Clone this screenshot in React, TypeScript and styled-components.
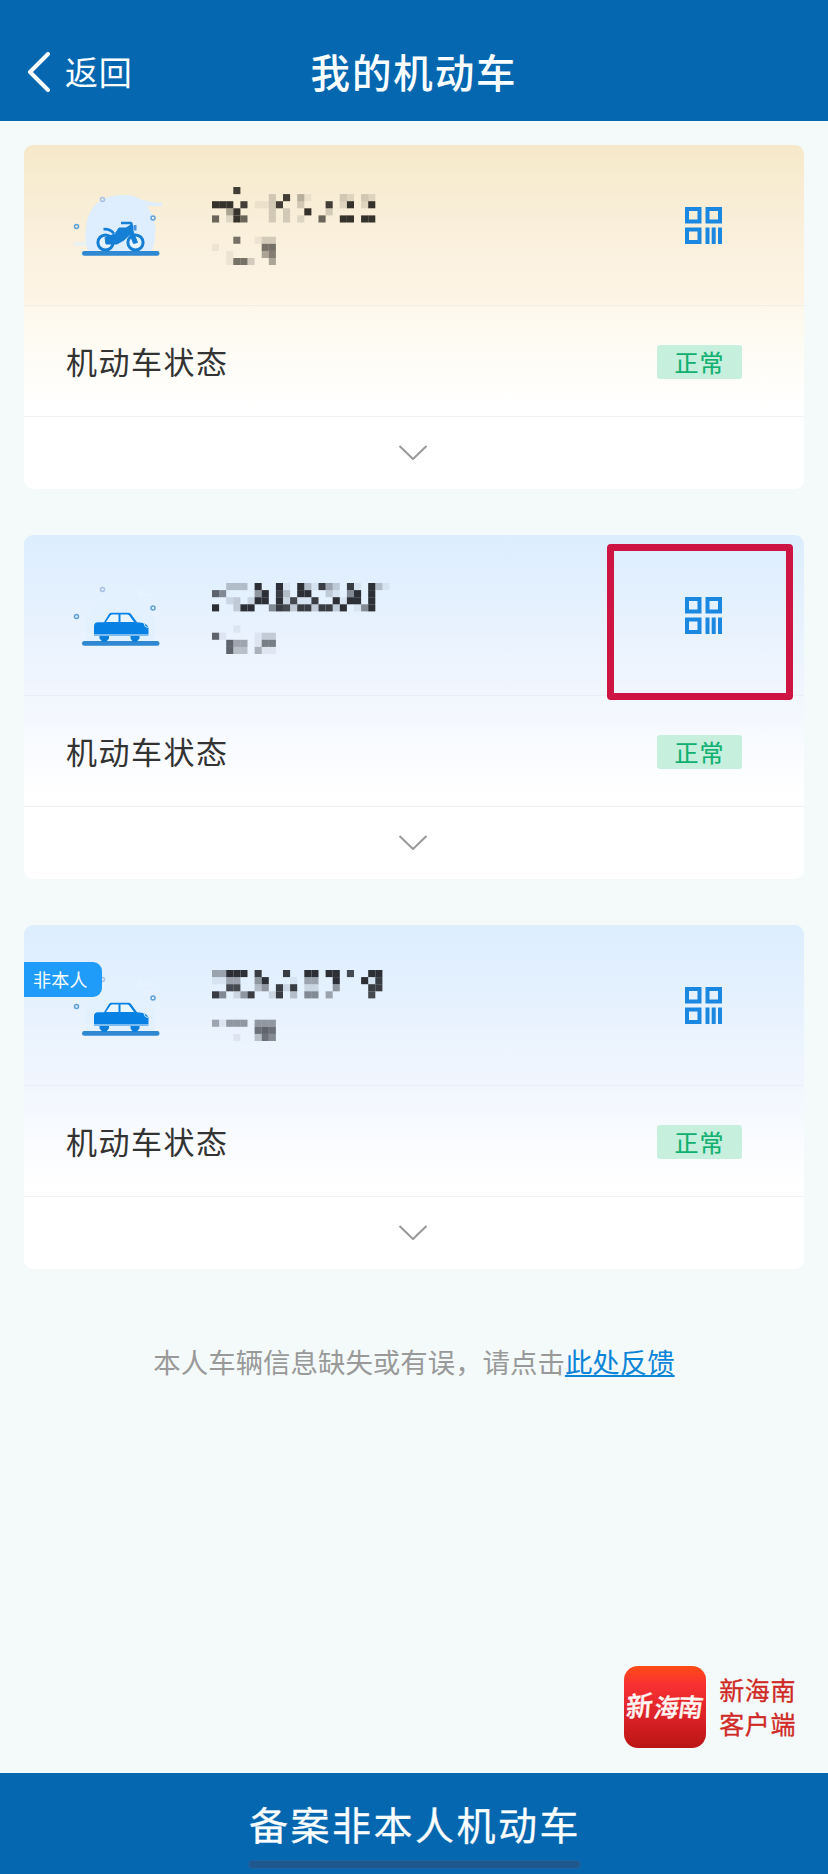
import React from "react";
import styled, { createGlobalStyle } from "styled-components";

const GlobalStyle = createGlobalStyle`
  * { box-sizing: border-box; }
  body {
    margin: 0;
    background: #f4fafa;
    font-family: "Noto Sans CJK SC", "Liberation Sans", sans-serif;
  }
`;

const Screen = styled.div`
  position: relative;
  width: 828px;
  height: 1874px;
  display: flex;
  flex-direction: column;
  background: #f4fafa;
  overflow: hidden;
`;

const Header = styled.header`
  height: 121px;
  flex: none;
  display: grid;
  grid-template-columns: 1fr auto 1fr;
  align-items: center;
  padding: 20px 27px 0;
  background: #0467af;
  color: #fafeff;
`;

const BackButton = styled.div`
  display: flex;
  align-items: center;
  gap: 15px;
  font-size: 33px;
  line-height: 48px;
  letter-spacing: 0.8px;

  svg {
    margin-top: 2px;
  }
`;

const Title = styled.h1`
  margin: 0;
  font-size: 39.5px;
  line-height: 56px;
  font-weight: 500;
  letter-spacing: 1.9px;
`;

const CardList = styled.main`
  display: flex;
  flex-direction: column;
  gap: 46px;
  padding: 24px 24px 0;
`;

const Card = styled.section<{ $warm?: boolean }>`
  position: relative;
  height: 344px;
  display: flex;
  flex-direction: column;
  border-radius: 9px;
  background: ${(p) =>
    p.$warm
      ? "linear-gradient(#f6e9ca 0, #f9efda 80px, #fdf4e6 156px, #fcf8ec 164px, #fffdf8 225px, #ffffff 262px)"
      : "linear-gradient(#dcedfe 0, #e5f1fe 70px, #eff5fe 145px, #f4f8fe 180px, #fcfdff 235px, #ffffff 264px)"};
`;

const Summary = styled.div<{ $warm?: boolean }>`
  height: 161px;
  display: flex;
  border-bottom: 1px solid ${(p) => (p.$warm ? "#f3eee2" : "#e9eff8")};
`;

const VehicleCell = styled.div`
  width: 188px;
  padding: 37px 0 0 48px;
`;

const PlateCell = styled.div<{ $top: number }>`
  flex: 1;
  padding-top: ${(p) => p.$top}px;
`;

const CodeCell = styled.div`
  width: 201px;
  padding: 62px 0 0 82px;
`;

const StatusRow = styled.div`
  height: 111px;
  display: flex;
  align-items: center;
  justify-content: space-between;
  padding: 2px 62px 0 42px;
  border-bottom: 1px solid #f0f2f4;
`;

const StatusLabel = styled.span`
  margin-top: -3px;
  font-size: 31px;
  line-height: 44px;
  letter-spacing: 1.5px;
  color: #333333;
`;

const StatusTag = styled.span`
  width: 85px;
  height: 34px;
  border-radius: 3px;
  background: #c7efdd;
  color: #0fb070;
  font-size: 24px;
  line-height: 33px;
  letter-spacing: 1px;
  text-align: center;
  -webkit-text-stroke: 0.2px #0fb070;
`;

const ExpandRow = styled.div`
  flex: 1;
  display: flex;
  align-items: center;
  justify-content: center;
  padding-right: 2px;
`;

const OwnerTag = styled.span`
  position: absolute;
  left: 0;
  top: 37px;
  width: 78px;
  height: 35px;
  border-radius: 0 9px 9px 0;
  background: #1f9bfa;
  color: #f7fdff;
  font-size: 18px;
  line-height: 35px;
  letter-spacing: 0.3px;
  padding-left: 9px;
`;

const Highlight = styled.div`
  position: absolute;
  left: 583px;
  top: 9px;
  width: 186px;
  height: 156px;
  border: 7px solid #ce1442;
  border-radius: 4px;
`;

const Feedback = styled.p`
  margin: 72px 0 0;
  text-align: center;
  font-size: 27.45px;
  line-height: 40px;
  color: #999999;
  white-space: nowrap;
`;

const FeedbackLink = styled.a`
  color: #0c84d8;
  text-decoration: underline;
  text-decoration-thickness: 2px;
  text-underline-offset: 2px;
`;

const Brand = styled.div`
  margin-top: auto;
  align-self: flex-end;
  display: flex;
  align-items: center;
  gap: 13px;
  padding: 0 32px 25px 0;
`;

const BrandName = styled.div`
  margin-top: -3px;
  font-size: 25px;
  line-height: 34px;
  letter-spacing: 0.6px;
  color: #cf2a26;
  -webkit-text-stroke: 0.3px #cf2a26;
`;

const Footer = styled.footer`
  height: 101px;
  flex: none;
  display: flex;
  flex-direction: column;
  align-items: center;
  background: #0467af;
  color: #fafeff;
`;

const FooterLabel = styled.span`
  margin-top: 21px;
  font-size: 39px;
  line-height: 58px;
  letter-spacing: 2.5px;
  padding-left: 2px;
  -webkit-text-stroke: 0.3px #fafeff;
`;

const HomeIndicator = styled.div`
  width: 333px;
  height: 9px;
  margin-top: 8px;
  border-radius: 5px;
  background: #1f588f;
  border: 1px solid #2163a0;
`;

const CELL = 7.1;

/* Each hex digit is the darkness of one block; a dot is an empty block. */
function Mosaic({ rows, ink }: { rows: string[]; ink: string }) {
  return (
    <svg width={25 * CELL} height={rows.length * CELL} display="block">
      {rows.flatMap((row, y) =>
        row.split("").map((c, x) =>
          c === "." ? null : (
            <rect
              key={`${x}-${y}`}
              x={x * CELL}
              y={y * CELL}
              width={CELL}
              height={CELL}
              fill={ink}
              fillOpacity={parseInt(c, 16) / 15}
            />
          )
        )
      )}
    </svg>
  );
}

function Surroundings() {
  return (
    <>
      <g fill="none" strokeWidth="1.5">
        <circle cx="4.5" cy="44.5" r="2" stroke="#5da0d6" />
        <circle cx="30.5" cy="17.5" r="2" stroke="#a5bfe6" />
        <circle cx="81" cy="36" r="2" stroke="#5da0d6" />
      </g>
      <rect x="10" y="69" width="77.5" height="4.8" rx="2.4" fill="#2f89d2" />
    </>
  );
}

function CarArt() {
  return (
    <svg width="100" height="80" viewBox="0 0 100 80">
      <path d="M15 69A35 35 0 1 1 81 69Z" fill="#e3f1fe" />
      <path d="M66 19Q78 23 89 23H66ZM3 62H20V66Z" fill="#e7f3fe" />
      <Surroundings />
      <path
        d="M22 54Q22 50.500 26 50.200H32L37 42Q38 40.700 39.500 40.700H56.500Q58 40.700 59 42L65 50.200Q76 50.800 76.500 56V62H22Z"
        fill="#0782e4"
      />
      <path d="M34 50L38.600 43.200Q39 42.500 40 42.500H46.500V50ZM48.500 42.500H55.500Q56.500 42.500 57 43.200L62 50H48.500Z" fill="#eaf6ff" />
      <path d="M72 51.500Q72.500 55.500 76 55.500" stroke="#d9edff" strokeWidth="1" fill="none" />
      <path d="M22 62H76.500V64H22Z" fill="#7dbcf0" />
      <path d="M27.500 64H37V66.500L34 70H30.500L27.500 66.500ZM58.500 64H67.500V66.500L64.500 70H61L58.500 66.500Z" fill="#0a7edb" />
    </svg>
  );
}

function MotorcycleArt() {
  return (
    <svg width="100" height="80" viewBox="0 0 100 80">
      <path
        d="M16 69Q12 58 14 44Q18 13 52 13Q62 13 68 17Q80 21 90 21V24H75Q86 40 83 55Q83 63 79 69Z"
        fill="#deeefe"
      />
      <path d="M0 60H14V64H4Z" fill="#eaf1f2" />
      <Surroundings />
      <g fill="#e6f4ff" stroke="#157fd6" strokeWidth="3">
        <circle cx="33.500" cy="60.500" r="7.600" />
        <circle cx="63.500" cy="60.500" r="7.600" />
      </g>
      <path d="M31.500 47.200Q38 46.500 42 51.500M49 41H58.500Q59.500 41 59.500 43V49" fill="none" stroke="#157fd6" strokeWidth="2.600" />
      <path
        d="M43 52L47 46H54L58 43.500H61V49L65.500 60.500L61.500 61.500L58 52.500L52 58L45 62H34L33 55.500Z"
        fill="#157fd6"
        stroke="#157fd6"
        strokeWidth="1"
        strokeLinejoin="round"
      />
      <path d="M62 43H64.500V48.500H62Z" fill="#4793dd" />
    </svg>
  );
}

function CodeIcon() {
  return (
    <svg width="37" height="37" viewBox="0 0 37 37" display="block">
      <g fill="none" stroke="#1a87e1" strokeWidth="4">
        <rect x="2" y="2" width="12.500" height="12.500" />
        <rect x="22.500" y="2" width="12.500" height="12.500" />
        <rect x="2" y="22.500" width="12.500" height="12.500" />
      </g>
      <path d="M20.500 20.500h4v16.500h-4zM26.700 20.500h4v16.500h-4zM33 20.500h4v16.500h-4z" fill="#1a87e1" />
    </svg>
  );
}

function BrandLogo() {
  return (
    <svg width="82" height="82" viewBox="0 0 82 82" overflow="visible">
      <defs>
        <linearGradient id="brand" x1="0" y1="0" x2="0" y2="1">
          <stop offset="0" stopColor="#ff4c16" />
          <stop offset="0.22" stopColor="#f93132" />
          <stop offset="0.6" stopColor="#dc2228" />
          <stop offset="1" stopColor="#bb1514" />
        </linearGradient>
      </defs>
      <rect width="82" height="82" rx="14" fill="url(#brand)" />
      <g
        fill="#fff5f2"
        stroke="#fff5f2"
        strokeWidth="0.4"
        strokeLinejoin="round"
        fontFamily="Noto Sans CJK SC, sans-serif"
        fontWeight="500"
      >
        <text fontSize="27" transform="translate(1.500 51.500) rotate(-6) skewX(-10)">新</text>
        <text fontSize="25" transform="translate(28.500 51.500) rotate(-3) skewX(-14)">海</text>
        <text fontSize="25" transform="translate(53 50) rotate(2) skewX(-6)">南</text>
      </g>
    </svg>
  );
}

interface Vehicle {
  kind: "car" | "motorcycle";
  plateTop: number;
  plate: string[];
  tag?: string;
  highlighted?: boolean;
}

const vehicles: Vehicle[] = [
  {
    kind: "motorcycle",
    plateTop: 42,
    plate: [
      "...e.....................",
      "........3.e.51....32.32..",
      "fff.e.113e..3...e.2f.2f..",
      "..6f....3.3..f..3........",
      "b.2fb...3.3.2..b..ff.ff..",
      "",
      "",
      "...a..133................",
      "1......aa................",
      "..1....69................",
      "..1aa3..6................",
    ],
  },
  {
    kind: "car",
    plateTop: 47.6,
    highlighted: true,
    plate: [
      "..444.f..f1.f41e63.e1.f41",
      "b8....7f.e4.ff..31.8f.f..",
      "..23.2ff.f2d11e..f1ff.f..",
      "f..3ff..8ed3ee3ee3f.18f..",
      "",
      "",
      "...1.....................",
      "b1....133................",
      "..b66.199................",
      "..b44.511................",
    ],
  },
  {
    kind: "car",
    plateTop: 45.4,
    tag: "非本人",
    plate: [
      "66fff.e...e..ff.ff.d..ff.",
      "1166..7f...1.66..f...f1e.",
      "..dd..47.e2e.22..7....ee.",
      "e8.27e..2e.4.88.6.....d..",
      "",
      "",
      "",
      "61777.777................",
      "......aba................",
      "...1..4a8................",
    ],
  },
];

function VehicleCard({ vehicle }: { vehicle: Vehicle }) {
  const warm = vehicle.kind === "motorcycle";
  return (
    <Card $warm={warm}>
      <Summary $warm={warm}>
        <VehicleCell>{warm ? <MotorcycleArt /> : <CarArt />}</VehicleCell>
        <PlateCell $top={vehicle.plateTop}>
          <Mosaic rows={vehicle.plate} ink={warm ? "#35312b" : "#2c3036"} />
        </PlateCell>
        <CodeCell>
          <CodeIcon />
        </CodeCell>
      </Summary>
      <StatusRow>
        <StatusLabel>机动车状态</StatusLabel>
        <StatusTag>正常</StatusTag>
      </StatusRow>
      <ExpandRow>
        <svg width="30" height="18" viewBox="0 0 30 18" fill="none" stroke="#999" strokeWidth="2">
          <path d="M1.500 2L15 15L28.500 2" strokeLinejoin="round" />
        </svg>
      </ExpandRow>
      {vehicle.tag && <OwnerTag>{vehicle.tag}</OwnerTag>}
      {vehicle.highlighted && <Highlight />}
    </Card>
  );
}

export default function App() {
  return (
    <Screen>
      <GlobalStyle />
      <Header>
        <BackButton>
          <svg width="23" height="40" viewBox="0 0 23 40" fill="none" stroke="#fafeff" strokeWidth="4">
            <path d="M21 2L3 20L21 38" strokeLinecap="round" strokeLinejoin="round" />
          </svg>
          返回
        </BackButton>
        <Title>我的机动车</Title>
      </Header>
      <CardList>
        {vehicles.map((v, i) => (
          <VehicleCard key={i} vehicle={v} />
        ))}
      </CardList>
      <Feedback>
        本人车辆信息缺失或有误，请点击<FeedbackLink>此处反馈</FeedbackLink>
      </Feedback>
      <Brand>
        <BrandLogo />
        <BrandName>
          新海南
          <br />
          客户端
        </BrandName>
      </Brand>
      <Footer>
        <FooterLabel>备案非本人机动车</FooterLabel>
        <HomeIndicator />
      </Footer>
    </Screen>
  );
}
